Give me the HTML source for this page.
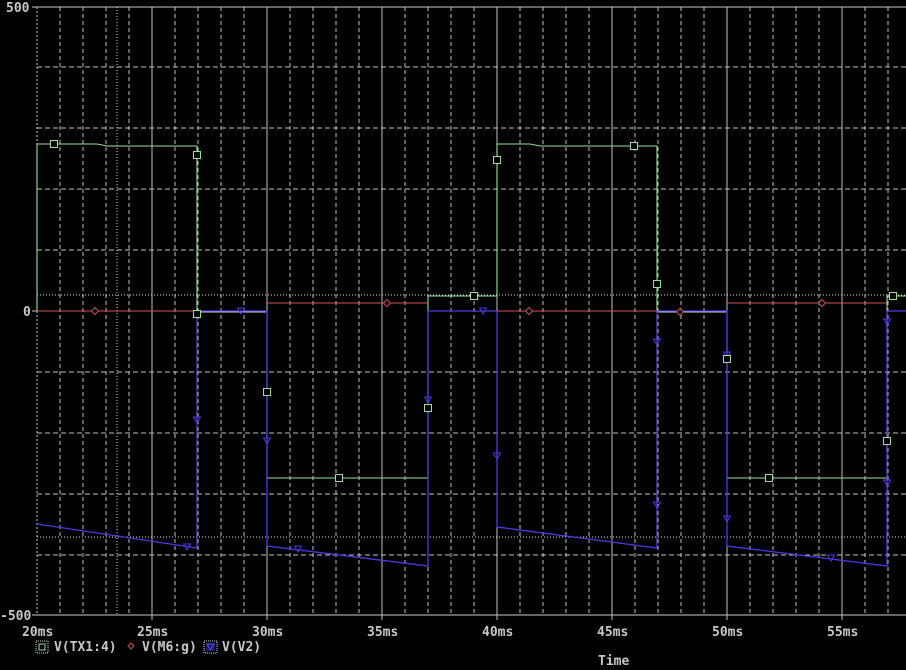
<!DOCTYPE html>
<html><head><meta charset="utf-8"><style>
html,body{margin:0;padding:0;background:#000;width:906px;height:670px;overflow:hidden}
svg{display:block}
text{font-family:"DejaVu Sans Mono","Liberation Mono",monospace;font-size:13px;fill:#c8c8c8;font-weight:bold}
</style></head><body>
<svg id="s" width="906" height="670" xmlns="http://www.w3.org/2000/svg">
<rect width="906" height="670" fill="#000"/>
<g id="grid"></g>
<line x1="37" y1="295" x2="906" y2="295" stroke="#e0e0e0" stroke-dasharray="1 2"/>
<line x1="37" y1="537" x2="906" y2="537" stroke="#e0e0e0" stroke-dasharray="1 2"/>
<line x1="117" y1="7" x2="117" y2="615" stroke="#e0e0e0" stroke-dasharray="1 2"/>
<line x1="32" y1="7" x2="906" y2="7" stroke="#c8c8c8"/>
<line x1="32" y1="615" x2="906" y2="615" stroke="#c8c8c8"/>
<line x1="32" y1="311" x2="37" y2="311" stroke="#c8c8c8"/>
<line x1="37" y1="7" x2="37" y2="615" stroke="#c8c8c8" stroke-dasharray="2 2"/>
<!-- green -->
<polyline fill="none" stroke="#98e098" stroke-width="1.1" points="37,311 37,144 97,144 107,146 197,146 197,311 267,311 267,478 428,478 428,296 497,296 497,144 530,144 540,146 657,146 657,311 727,311 727,478 887,478 887,296 906,296"/>
<!-- blue -->
<polyline fill="none" stroke="#4a3ae0" stroke-width="1.3" points="37,524 197,548 197,311 267,311 267,546 428,566 428,311 497,311 497,527 657,548 657,311 727,311 727,546 887,566 887,311 906,311"/>
<!-- red -->
<polyline fill="none" stroke="#d05555" points="37,311 197,311"/>
<polyline fill="none" stroke="#d05555" points="267,303 428,303"/>
<polyline fill="none" stroke="#d05555" points="497,311 657,311"/>
<polyline fill="none" stroke="#d05555" points="727,303 887,303"/>
<polyline fill="none" stroke="#c8d0e8" points="198,312 266,312"/>
<polyline fill="none" stroke="#c8d0e8" points="658,312 726,312"/>
<g id="mk"></g>
<text x="6" y="12">500</text>
<text x="23" y="316">0</text>
<text x="0" y="620">-500</text>
<text x="22" y="636">20ms</text>
<text x="137" y="636">25ms</text>
<text x="252" y="636">30ms</text>
<text x="367" y="636">35ms</text>
<text x="482" y="636">40ms</text>
<text x="597" y="636">45ms</text>
<text x="712" y="636">50ms</text>
<text x="827" y="636">55ms</text>
<rect x="36" y="641" width="12" height="12" fill="none" stroke="#ddd" stroke-dasharray="1 1"/>
<rect x="39" y="644" width="6" height="6" fill="none" stroke="#98e098"/>
<text x="54" y="651">V(TX1:4)</text>
<path d="M131 643 L134 646 L131 649 L128 646 Z" fill="none" stroke="#c85050"/>
<text x="142" y="651">V(M6:g)</text>
<rect x="204" y="641" width="13" height="12" fill="none" stroke="#ddd" stroke-dasharray="1 1"/>
<rect x="206" y="643" width="9" height="8" fill="#1a1a70"/>
<path d="M207 644 L214 644 L210.5 650 Z" fill="none" stroke="#5a4ae8"/>
<text x="222" y="651">V(V2)</text>
<text x="598" y="665">Time</text>
</svg>
<script>
var g=document.getElementById('grid'),ns='http://www.w3.org/2000/svg';
function L(x1,y1,x2,y2,da){var l=document.createElementNS(ns,'line');l.setAttribute('x1',x1);l.setAttribute('y1',y1);l.setAttribute('x2',x2);l.setAttribute('y2',y2);l.setAttribute('stroke','#c0c0c0');if(da)l.setAttribute('stroke-dasharray',da);g.appendChild(l);}
for(var k=1;k<=37;k++){var x=37+23*k;if(k%5==0){L(x,7,x,620);}else L(x,7,x,615,'4 3');}
[67,128,189,250,372,433,494,555].forEach(function(y){L(37,y,906,y,'5 3');});
var m=document.getElementById('mk');
function sq(x,y){var r=document.createElementNS(ns,'rect');r.setAttribute('x',x-3.5);r.setAttribute('y',y-3.5);r.setAttribute('width',7);r.setAttribute('height',7);r.setAttribute('fill','#000');r.setAttribute('stroke','#98e098');m.appendChild(r);}
function di(x,y){var p=document.createElementNS(ns,'path');p.setAttribute('d','M'+x+' '+(y-3.5)+' L'+(x+3.5)+' '+y+' L'+x+' '+(y+3.5)+' L'+(x-3.5)+' '+y+' Z');p.setAttribute('fill','#000');p.setAttribute('stroke','#c85050');m.appendChild(p);}
function tr(x,y){var p=document.createElementNS(ns,'path');p.setAttribute('d','M'+(x-3.5)+' '+(y-3)+' L'+(x+3.5)+' '+(y-3)+' L'+x+' '+(y+3)+' Z');p.setAttribute('fill','none');p.setAttribute('stroke','#4a3ae0');m.appendChild(p);}
[[95,311],[387,303],[529,311],[680,312],[822,303]].forEach(function(a){di(a[0],a[1]);});
[[197,420],[187,547],[241,311],[267,441],[298,549],[428,400],[483,311],[497,456],[657,342],[657,505],[727,355],[727,519],[831,558],[887,322],[887,483]].forEach(function(a){tr(a[0],a[1]);});
[[54,144],[197,155],[197,314],[267,392],[339,478],[428,408],[474,296],[497,160],[634,146],[657,284],[727,359],[769,478],[887,441],[893,296]].forEach(function(a){sq(a[0],a[1]);});
</script>
</body></html>
